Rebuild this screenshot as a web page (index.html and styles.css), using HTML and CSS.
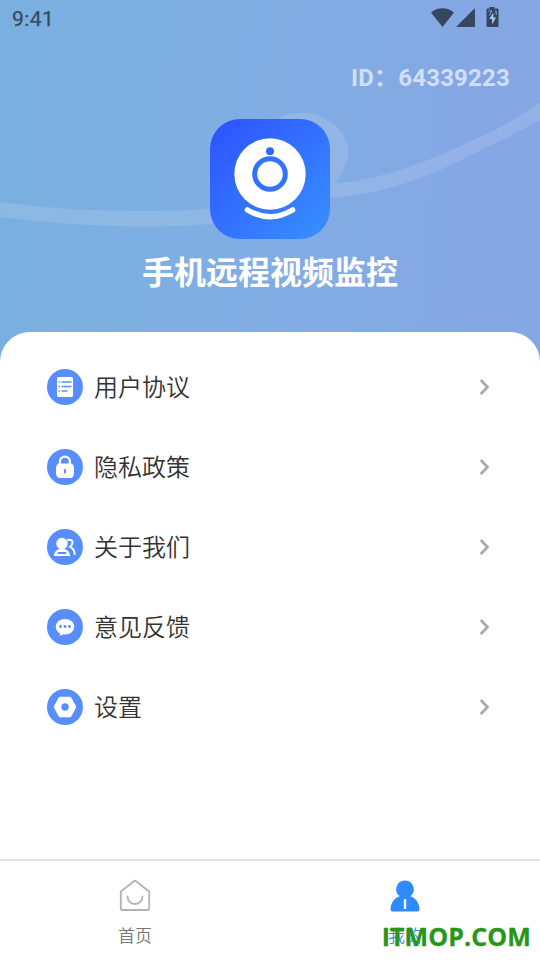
FILE: index.html
```
<!DOCTYPE html>
<html lang="zh-CN">
<head>
<meta charset="utf-8">
<title>手机远程视频监控</title>
<link rel="stylesheet" href="styles.css">
</head>
<body>
<div class="app">
  <header class="hero">
    <svg class="swoosh" viewBox="0 0 540 362" aria-hidden="true">
      <path d="M0 202Q75 212 155 211Q190 211 230 207V222Q180 228 120 226Q60 225 0 217Z"/>
      <path d="M278 118C292 111 310 111 324 118C341 127 350 141 348 156C347 166 341 175 336 183C390 180 450 151 482 136Q515 121 540 102V120Q515 134 477 152C430 177 380 196 325 198V130L298 121Z"/>
    </svg>
    <div class="status">
      <span class="time">9:41</span>
      <svg class="status-icons" viewBox="0 0 68 22" aria-hidden="true">
        <path d="M0 5.5C6.500 -.3 16.500 -.3 23 5.500L11.500 20Z"/>
        <path d="M25 20L44 1V20Z"/>
        <path d="M58.500 0h5v1.500h3q1 0 1 1V19q0 1-1 1H56.500q-1 0-1-1V2.500q0-1 1-1h2Z"/>
        <path class="bolt" d="M62.300 5.500L58.300 12h2.800v5.500L65 10.500h-2.700Z"/>
        <path class="notch" d="M57.500 4h3.300l-2.500 4.500M64 4h1.200v4"/>
      </svg>
    </div>
    <div class="device-id">ID：64339223</div>
    <svg class="logo" viewBox="0 0 120 120" aria-hidden="true">
      <defs><linearGradient id="logo-fill" x1="0" y1="0" x2="1" y2="1"><stop offset=".08" stop-color="#2e56ff"/><stop offset=".92" stop-color="#378cff"/></linearGradient></defs>
      <rect width="120" height="120" rx="30" fill="url(#logo-fill)"/>
      <circle cx="60" cy="55" r="35.700" fill="#fff"/>
      <circle cx="60" cy="55" r="15.300" fill="none" stroke="#3274ff" stroke-width="5"/>
      <circle cx="60" cy="32.300" r="4" fill="#3068f5"/>
      <path d="M37.500 91Q60 104.500 82.500 91" fill="none" stroke="#fff" stroke-width="5.500" stroke-linecap="round"/>
    </svg>
    <h1 class="title">手机远程视频监控</h1>
  </header>
  <main class="panel">
    <a class="item">
      <svg class="icon" viewBox="0 0 36 36"><circle class="disc" cx="18" cy="18" r="18"/><rect x="10" y="8" width="16" height="20" rx="1.500"/><path class="line" d="M11.500 13h1.500M14.500 13h10M11.500 17.500h1.500M14.500 17.500h10M11.500 22h1.500M14.500 22h6"/></svg>
      <span class="label">用户协议</span>
      <svg class="arrow" viewBox="0 0 12 18"><path d="M2.500 2.800L8.500 9L2.500 15.200"/></svg>
    </a>
    <a class="item">
      <svg class="icon" viewBox="0 0 36 36"><circle class="disc" cx="18" cy="18" r="18"/><path class="white-line" d="M12.900 16v-3.300a5 5 0 0 1 10 0V16"/><path d="M13 14.500h10q4 0 4 5v4q0 5.500-4 5.500H13q-4 0-4-5.500v-4q0-5 4-5Z"/><rect class="disc" x="17" y="20" width="2" height="4.500" rx=".7"/></svg>
      <span class="label">隐私政策</span>
      <svg class="arrow" viewBox="0 0 12 18"><path d="M2.500 2.800L8.500 9L2.500 15.200"/></svg>
    </a>
    <a class="item">
      <svg class="icon" viewBox="0 0 36 36"><circle class="disc" cx="18" cy="18" r="18"/><circle cx="15" cy="14.500" r="5.700"/><path d="M12.500 18h5v2c3.500 1 5.500 3.500 5.500 7H7c0-3.500 2-6 5.500-7Z"/><path class="line wide" d="M11.500 24h7"/><path class="white-line thin" d="M21 11q4.500-1 4.500 2.700 0 2.300-2.300 4.100Q27.500 20 27.700 25"/></svg>
      <span class="label">关于我们</span>
      <svg class="arrow" viewBox="0 0 12 18"><path d="M2.500 2.800L8.500 9L2.500 15.200"/></svg>
    </a>
    <a class="item">
      <svg class="icon" viewBox="0 0 36 36"><circle class="disc" cx="18" cy="18" r="18"/><ellipse cx="18" cy="17.700" rx="9.300" ry="7.700"/><path d="M12 22.500q1.500 2 .5 4 3 0 5-2.500Z"/><g class="disc"><circle cx="13.500" cy="17.500" r="1.400"/><circle cx="18" cy="17.500" r="1.400"/><circle cx="22.500" cy="17.500" r="1.400"/></g></svg>
      <span class="label">意见反馈</span>
      <svg class="arrow" viewBox="0 0 12 18"><path d="M2.500 2.800L8.500 9L2.500 15.200"/></svg>
    </a>
    <a class="item">
      <svg class="icon" viewBox="0 0 36 36"><circle class="disc" cx="18" cy="18" r="18"/><path d="M13.300 7.800h9.400q1.100 0 1.700 1l4.400 8q.6 1.200 0 2.400l-4.400 8q-.6 1-1.700 1h-9.400q-1.100 0-1.700-1l-4.400-8q-.6-1.200 0-2.400l4.400-8q.6-1 1.700-1Z"/><circle class="disc" cx="18" cy="18" r="3.700"/></svg>
      <span class="label">设置</span>
      <svg class="arrow" viewBox="0 0 12 18"><path d="M2.500 2.800L8.500 9L2.500 15.200"/></svg>
    </a>
  </main>
  <nav class="tabs">
    <a class="tab">
      <svg class="tab-icon home" viewBox="0 0 34 34"><path d="M2.800 12.500L16 2.200q1-.8 2 0l13.200 10.300V29.500q0 1.500-1.500 1.500H4.300q-1.500 0-1.500-1.500Z"/><path d="M9.500 17.500a7.500 7.500 0 0 0 15 0"/></svg>
      <span>首页</span>
    </a>
    <a class="tab active">
      <svg class="tab-icon" viewBox="0 0 34 34"><path d="M17 1.500a8.800 8.800 0 0 1 5.300 15.800C27.500 19 31 23 31.500 30.500q0 2-2 2h-25q-2 0-2-2C3 23 6.500 19 11.700 17.300A8.800 8.800 0 0 1 17 1.500Z"/><path class="tie" d="M17 20v10"/></svg>
      <span>我的</span>
    </a>
  </nav>
  <div class="watermark">ITMOP.COM</div>
</div>
</body>
</html>
```
FILE: styles.css
```
* { box-sizing: border-box; }
body { margin: 0; font-family: Roboto, "Noto Sans CJK SC", sans-serif; }
svg { display: block; flex: none; }
.app { position: relative; display: flex; flex-direction: column; width: 540px; height: 960px; overflow: hidden; background: #fff; }
.hero { position: relative; display: flex; flex-direction: column; align-items: center; height: 362px; background: linear-gradient(94deg, #79b0df 0%, #7eafe2 30%, #82ace3 58%, #84a8e4 80%, #85a7e4 100%); }
.hero > * { position: relative; }
.hero > .swoosh { position: absolute; top: 0; left: 0; width: 540px; height: 362px; fill: #fff; fill-opacity: .12; }
.status { display: flex; justify-content: space-between; align-items: flex-start; width: 100%; height: 62px; padding: 7px 42px 0 12px; color: #35495f; }
.time { font-size: 21px; line-height: 24px; font-weight: 400; -webkit-text-stroke: .25px; letter-spacing: .4px; }
.status-icons { width: 68px; height: 22px; margin-right: -.5px; fill: #35475f; }
.bolt { fill: #a9c9f0; }
.notch { fill: none; stroke: #84aae1; stroke-width: 1; }
.device-id { align-self: flex-end; height: 57px; margin-right: 30px; color: #d0dff5; font-size: 24px; font-weight: 700; line-height: 32px; letter-spacing: .2px; }
.logo { width: 120px; height: 120px; }
.title { margin: 10px 0 0; color: #fff; font-size: 32px; line-height: 48px; font-weight: 700; }
.panel { position: relative; flex: 1; margin-top: -30px; padding: 15px 50px 0 47px; border-radius: 30px 30px 0 0; background: #fff; }
.item { display: flex; align-items: center; height: 80px; color: #333; }
.icon { width: 36px; height: 36px; fill: #fff; }
.disc { fill: #588efb; }
.line { fill: none; stroke: #588efb; stroke-width: 1.3; }
.wide { stroke-width: 2; stroke-linecap: round; }
.white-line { fill: none; stroke: #fff; stroke-width: 2.3; stroke-linecap: round; }
.white-line.thin { stroke-width: 2; }
.label { flex: 1; margin: 2px 0 0 11px; font-size: 24px; line-height: 36px; font-weight: 350; }
.arrow { width: 12px; height: 18px; margin: 0 -1px 1px 0; fill: none; stroke: #aaa; stroke-width: 2.8; stroke-linecap: round; }
.tabs { display: grid; grid-template-columns: 1fr 1fr; height: 101px; border-top: 2px solid #e4e4e4; background: #fff; }
.tab { display: flex; flex-direction: column; align-items: center; padding-top: 18px; color: #777; font-size: 17px; line-height: 26px; font-weight: 350; }
.tab span { margin-top: 10px; }
.tab-icon { width: 34px; height: 34px; margin-left: -1px; fill: #2e8aff; }
.home { fill: none; stroke: #b3b3b3; stroke-width: 1.8; stroke-linecap: round; }
.tie { stroke: #fff; stroke-width: 2.4; }
.active { color: #348cff; }
.watermark { position: absolute; right: 9px; bottom: 6px; color: #289617; font: 700 25px/36px "Open Sans", sans-serif; letter-spacing: .1px; -webkit-text-stroke: .3px; }
```
